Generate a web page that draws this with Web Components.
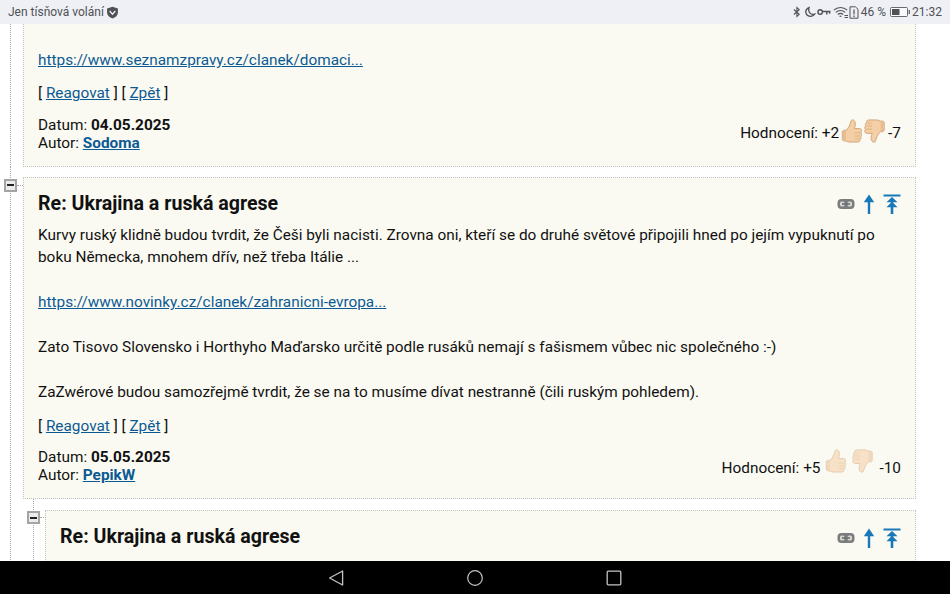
<!DOCTYPE html>
<html lang="cs">
<head>
<meta charset="utf-8">
<title>Diskuze</title>
<style>
    html, body { margin: 0; padding: 0; background: #fff; }
    body { font-family: Roboto, "Liberation Sans", sans-serif; }
</style>
</head>
<body>
<phone-screen>
    <status-bar slot="status"></status-bar>

    <comment-thread first>
        <comment-card first date="04.05.2025" author="Sodoma" up="+2" down="-7">
            <div style="height:25px"></div>
            <a href="#">https://www.seznamzpravy.cz/clanek/domaci...</a>
        </comment-card>
    </comment-thread>

    <comment-thread toggle>
        <comment-card title="Re: Ukrajina a ruská agrese" date="05.05.2025" author="PepikW" up="+5" down="-10" faded>
            Kurvy ruský klidně budou tvrdit, že Češi byli nacisti. Zrovna oni, kteří se do druhé světové připojili hned po jejím vypuknutí po boku Německa, mnohem dřív, než třeba Itálie ...<br><br>
            <a href="#">https://www.novinky.cz/clanek/zahranicni-evropa...</a><br><br>
            Zato Tisovo Slovensko i Horthyho Maďarsko určitě podle rusáků nemají s fašismem vůbec nic společného :-)<br><br>
            ZaZwérové budou samozřejmě tvrdit, že se na to musíme dívat nestranně (čili ruským pohledem).
        </comment-card>
        <comment-thread toggle nested>
            <comment-card cut title="Re: Ukrajina a ruská agrese"></comment-card>
        </comment-thread>
    </comment-thread>

    <nav-bar slot="nav"></nav-bar>
</phone-screen>

<script>
(function() {
    "use strict";

    class phoneScreen extends HTMLElement {
        constructor() {
            super();
            this.attachShadow({mode: 'open'}).innerHTML = `
                <style>
                    :host { display: flex; flex-direction: column; width: 950px; height: 594px; overflow: hidden; background: #fff; }
                    main { flex: 1; min-height: 0; overflow: hidden; position: relative; }
                </style>
                <slot name="status"></slot>
                <main><slot></slot></main>
                <slot name="nav"></slot>
            `;
        }
    }

    class statusBar extends HTMLElement {
        constructor() {
            super();
            this.attachShadow({mode: 'open'}).innerHTML = `
                <style>
                    :host { display: flex; align-items: center; height: 24px; flex: none; padding: 0 8px; background: #eef0f6; color: #505154; font-size: 12px; }
                    .left { display: flex; align-items: center; gap: 2px; }
                    .right { margin-left: auto; display: flex; align-items: center; }
                    svg { display: block; }
                    .pct { margin: 0 4px 0 1px; }
                    .time { margin-left: 2px; }
                </style>
                <div class="left">
                    <span>Jen tísňová volání</span>
                    <svg width="13" height="13" viewBox="0 0 12 12"><path d="M1 2.2 6 .8l5 1.400v3.600c0 2.900-2.200 4.800-5 5.700-2.800-.9-5-2.800-5-5.700z" fill="#505154"/><path d="M3.400 4.600 6 7.600l2.600-3" fill="none" stroke="#eef0f6" stroke-width="1.200"/></svg>
                </div>
                <div class="right">
                    <svg width="8" height="12" viewBox="0 0 9 12" style="margin-right:3px"><path d="M1 3.200l6 5.400L4.400 11V1L7 3.400 1 8.800" fill="none" stroke="#505154" stroke-width="1.200"/></svg>
                    <svg width="12" height="13" viewBox="0 0 13 13" style="margin-right:1px"><path d="M5.500 1.200C3 2.200 1.600 4.200 2 6.600c.5 2.900 3.500 4.600 6.200 3.900 1.300-.3 2.500-1.100 3.300-2.300-2.600.7-5-.2-5.900-2.300-.6-1.400-.6-3-.1-4.700z" fill="none" stroke="#505154" stroke-width="1.400"/></svg>
                    <svg width="14" height="8" viewBox="0 0 15 8" style="margin-right:2px"><circle cx="3.400" cy="4" r="2.400" fill="none" stroke="#505154" stroke-width="1.500"/><path d="M5.800 3.400H14.500M10.500 3.400V6.600M13.500 3.400V6" fill="none" stroke="#505154" stroke-width="1.500"/></svg>
                    <svg width="16" height="13" viewBox="0 0 16 13"><path d="M.8 4.200C4.600.6 10.400.6 14.200 4.200M2.800 6.400c2.700-2.500 6.700-2.500 9.400 0M4.800 8.500c1.600-1.400 3.800-1.400 5.400 0M6.600 10.500c.6-.5 1.200-.5 1.800 0" fill="none" stroke="#505154" stroke-width="1.100"/><path d="M11.500 9.500h3.500M11.500 11.500h3.500" stroke="#505154" stroke-width="1"/></svg>
                    <svg width="10" height="13" viewBox="0 0 10 13" style="margin-right:1px"><path d="M1 .8h5.400L9 3.400v8.800H1z" fill="none" stroke="#505154" stroke-width="1"/><path d="M5 3.400v5M5 9.600v1.400" stroke="#505154" stroke-width="1.200"/></svg>
                    <span class="pct">46 %</span>
                    <svg width="20" height="10" viewBox="0 0 20 10"><rect x=".5" y=".5" width="17" height="9" rx="1" fill="#f8f9fb" stroke="#6a6b6e"/><rect x="2" y="2" width="7.500" height="6" fill="#505154"/><rect x="18.600" y="3" width="1.400" height="4" fill="#6a6b6e"/></svg>
                    <span class="time">21:32</span>
                </div>
            `;
        }
    }

    class navBar extends HTMLElement {
        constructor() {
            super();
            this.attachShadow({mode: 'open'}).innerHTML = `
                <style>
                    :host { display: grid; grid-template-columns: repeat(3, 16px); justify-content: center; column-gap: 123px; align-items: center; height: 33px; flex: none; background: #000; }
                    svg { display: block; }
                </style>
                <svg width="16" height="16" viewBox="0 0 16 16"><path d="M14.600 1 1.600 8l13 7z" fill="none" stroke="#c4c4c4" stroke-width="1.300" stroke-linejoin="round"/></svg>
                <svg width="16" height="16" viewBox="0 0 16 16"><circle cx="8" cy="8" r="7.300" fill="none" stroke="#c4c4c4" stroke-width="1.200"/></svg>
                <svg width="16" height="16" viewBox="0 0 16 16"><rect x="1.200" y="1.200" width="13.600" height="13.600" rx="1" fill="none" stroke="#c4c4c4" stroke-width="1.300"/></svg>
            `;
        }
    }

    // thumb emoji, chunky fist with the thumb up; the down one is this turned by 180deg
    const thumb = `
        <path d="M1.200 12.500c0-1 .8-1.700 1.800-1.700h2C6.800 8.600 8.300 6.400 9 3.800 9.300 2.400 9.500.8 11 .8c1.600 0 2.700 1.700 2.700 3.800 0 1.700-.4 3.300-1 4.600h4.900c1.300 0 2.200 1 2.200 2.100 0 .7-.3 1.300-.8 1.700.5.400.8 1 .8 1.700 0 .8-.4 1.400-1 1.800.3.400.5.800.5 1.300 0 .9-.6 1.600-1.400 1.800.1.300.2.500.2.800 0 1-.9 1.700-2.100 1.700H8.500c-1.500 0-2.700-.4-3.800-1.100H3c-1 0-1.800-.7-1.800-1.700z" fill="#f4cfa6" stroke="#cfa277" stroke-width=".9"/>
        <path d="M1.700 12.500c0-.8.700-1.300 1.500-1.300h1.500v9.400H3.200c-.8 0-1.500-.5-1.500-1.300z" fill="#e9bd90"/>
        <path d="M12.700 13.300h5.700M13 16.300h5M13.300 19.100h3.900" fill="none" stroke="#dcb088" stroke-width=".9"/>`;

    class commentCard extends HTMLElement {
        constructor() {
            super();
            this.attachShadow({mode: 'open'});
        }

        connectedCallback() {
            const title = this.getAttribute('title');
            const faded = this.hasAttribute('faded');
            const cut = this.hasAttribute('cut');
            this.shadowRoot.innerHTML = `
                <style>
                    :host { display: block; background: #fbfaf2; border: 1px dotted #c4c4c4; color: #111; font-size: 15.36px; line-height: 22.4px; padding: 0 14px; box-sizing: border-box; }
                    :host([first]) { border-top: none; }
                    :host([cut]) { border-bottom: none; height: 70px; }
                    header { display: flex; align-items: center; justify-content: space-between; height: 46px; }
                    h3 { margin: 6px 0 0; font-size: 19.6px; font-weight: 700; color: #111; }
                    .tools { display: flex; align-items: center; gap: 8px; margin-top: 7px; }
                    .tools svg { display: block; }
                    a, ::slotted(a) { color: #0b5a94; }
                    .actions { margin-top: 12px; }
                    :host([first]) .actions { margin-top: 11px; }
                    footer { display: flex; justify-content: space-between; align-items: center; margin-top: 11px; padding-bottom: 14px; line-height: 18px; }
                    .rating { display: flex; align-items: center; margin-bottom: 2px; }
                    .rating svg { display: block; flex: none; margin: -2px 0 2px; }
                    .rating.faded { margin: 4px 0 0; }
                    .rating.faded svg { opacity: .55; margin-top: -7px; margin-bottom: 7px; }
                </style>
                ${title ? `<header><h3>${title}</h3><div class="tools">
                    <svg width="18" height="12" viewBox="0 0 18 12"><rect x=".5" y="1" width="17" height="10" rx="4" fill="#7b7c7d"/><rect x="3" y="3.600" width="4.500" height="4.800" rx="1.500" fill="#d5d5d0"/><rect x="10.500" y="3.600" width="4.500" height="4.800" rx="1.500" fill="#d5d5d0"/><path d="M5 6h8" stroke="#6b6c6d" stroke-width="1.600"/></svg>
                    <svg width="12" height="20" viewBox="0 0 12 20"><path d="M6 .5.800 8.300h4V20h2.400V8.300h4z" fill="#1878b8"/></svg>
                    <svg width="18" height="20" viewBox="0 0 18 20"><path d="M.5.500h17v1.900H.5zM9 3 3.500 8.200h4.200v.8L3.500 13.200h4.200V20h2.600v-6.800h4.200L10.300 9v-.8h4.200z" fill="#1878b8"/></svg>
                </div></header>` : ''}
                ${cut ? '' : `
                <div class="body"><slot></slot></div>
                <div class="actions">[ <a href="#">Reagovat</a> ] [ <a href="#">Zpět</a> ]</div>
                <footer>
                    <div>Datum: <b>${this.getAttribute('date')}</b><br>Autor: <b><a href="#">${this.getAttribute('author')}</a></b></div>
                    <div class="rating ${faded ? 'faded' : ''}">
                        <span>Hodnocení: ${this.getAttribute('up')}</span>
                        <svg width="21" height="24" viewBox="0 0 20 23" style="margin-left:${faded ? 5 : 2}px"><g>${thumb}</g></svg>
                        <svg width="22" height="24" viewBox="0 0 20 23" style="margin-left:${faded ? 6 : 2}px;margin-right:${faded ? 5 : 2}px;transform:rotate(180deg)"><g>${thumb}</g></svg>
                        <span>${this.getAttribute('down')}</span>
                    </div>
                </footer>`}
            `;
        }
    }

    class commentThread extends HTMLElement {
        constructor() {
            super();
            this.attachShadow({mode: 'open'}).innerHTML = `
                <style>
                    :host { display: block; position: relative; padding: 10px 34px 0 23px; }
                    :host([first]) { padding-top: 0; }
                    :host([nested]) { padding: 11px 0 0 22px; }
                    .line { position: absolute; left: 10px; top: 0; bottom: 0; border-left: 1px dotted #a8a8a8; }
                    .toggle { position: absolute; left: 4px; top: 12px; width: 9px; height: 9px; border: 2px solid #a4a4a4; background: #ececec; display: none; align-items: center; justify-content: center; }
                    .toggle i { display: block; width: 7px; height: 2px; background: #222; }
                    .dash { position: absolute; left: 17px; top: 18px; width: 6px; border-top: 1px dotted #a8a8a8; display: none; }
                    :host([toggle]) .toggle { display: flex; }
                    :host([toggle]) .dash { display: block; }
                </style>
                <div class="line"></div>
                <div class="dash"></div>
                <div class="toggle"><i></i></div>
                <slot></slot>
            `;
        }
    }

    window.customElements.define('phone-screen', phoneScreen);
    window.customElements.define('status-bar', statusBar);
    window.customElements.define('nav-bar', navBar);
    window.customElements.define('comment-card', commentCard);
    window.customElements.define('comment-thread', commentThread);
})();
</script>
</body>
</html>
